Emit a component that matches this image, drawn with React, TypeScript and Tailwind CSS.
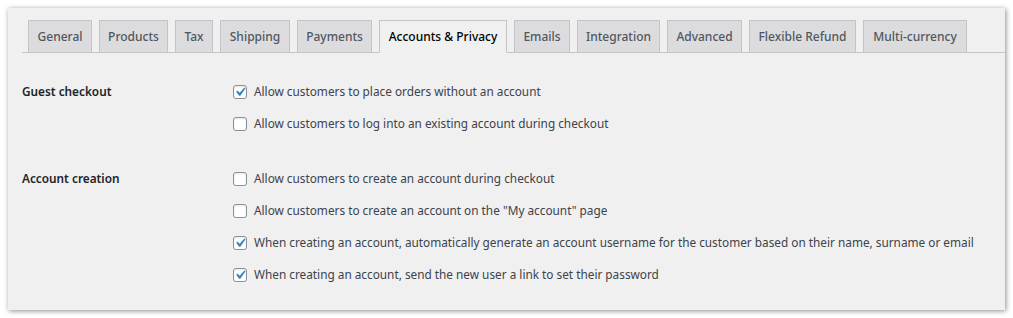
const TABS = [
  { name: "General", w: "w-[64px]" },
  { name: "Products", w: "w-[69px]" },
  { name: "Tax", w: "w-[38px]" },
  { name: "Shipping", w: "w-[70px]" },
  { name: "Payments", w: "w-[75px]" },
  { name: "Accounts & Privacy", w: "w-[128px]" },
  { name: "Emails", w: "w-[56px]" },
  { name: "Integration", w: "w-[83px]" },
  { name: "Advanced", w: "w-[75px]" },
  { name: "Flexible Refund", w: "w-[107px]" },
  { name: "Multi-currency", w: "w-[104px]" },
];

const ACTIVE = "Accounts & Privacy";

const GROUPS = [
  {
    label: "Guest checkout",
    options: [
      { text: "Allow customers to place orders without an account", checked: true },
      { text: "Allow customers to log into an existing account during checkout", checked: false },
    ],
  },
  {
    label: "Account creation",
    options: [
      { text: "Allow customers to create an account during checkout", checked: false },
      { text: 'Allow customers to create an account on the "My account" page', checked: false },
      {
        text: "When creating an account, automatically generate an account username for the customer based on their name, surname or email",
        checked: true,
      },
      { text: "When creating an account, send the new user a link to set their password", checked: true },
    ],
  },
];

const Checkbox = ({ checked }: { checked: boolean }) => (
  <span className="relative h-[14px] w-[14px] shrink-0 rounded-[3px] border border-[#8c8f94] bg-white shadow-[inset_0_1px_2px_rgba(0,0,0,0.1)]">
    {checked && (
      <svg viewBox="0 0 20 20" className="absolute left-[-3px] top-[-3px] h-[18px] w-[18px]">
        <path d="M14.83 4.89l1.34.94-5.81 8.38H9.02L5.78 9.67l1.34-1.25 2.57 2.4z" fill="#3582c4" />
      </svg>
    )}
  </span>
);

export default function App() {
  return (
    <div className="h-[318px] w-[1013px] bg-white p-[8px] font-['Noto_Sans',sans-serif]">
      <div className="h-[302px] w-[997px] bg-[#f0f0f1] pt-[12px] shadow-[1px_1px_5px_rgba(0,0,0,0.45)]">
        {/* tabs */}
        <div className="ml-[14px] flex gap-[7px] border-b border-[#c3c4c7] pl-[6px]">
          {TABS.map((tab) => {
            const active = tab.name === ACTIVE;
            return (
              <div
                key={tab.name}
                className={
                  active
                    ? `-mb-px flex h-[33px] items-center justify-center whitespace-nowrap border border-[#c3c4c7] border-b-[#f0f0f1] bg-[#f0f0f1] text-[12px] font-medium text-black ${tab.w}`
                    : `-mb-px flex h-[33px] items-center justify-center whitespace-nowrap border border-[#c3c4c7] bg-[#dcdcde] text-[12px] font-medium text-[#50575e] ${tab.w}`
                }
              >
                {tab.name}
              </div>
            );
          })}
        </div>

        {/* settings */}
        <div className="flex flex-col gap-[23px] pl-[14px] pt-[23px]">
          {GROUPS.map((group) => (
            <div key={group.label} className="flex">
              <div className="flex h-[32px] w-[211px] items-center text-[11.8px] font-semibold text-[#1d2327]">
                {group.label}
              </div>
              <div className="flex flex-col">
                {group.options.map((opt) => (
                  <label
                    key={opt.text}
                    className="flex h-[32px] items-center gap-[7px] whitespace-nowrap text-[11.8px] text-[#3c434a]"
                  >
                    <Checkbox checked={opt.checked} />
                    {opt.text}
                  </label>
                ))}
              </div>
            </div>
          ))}
        </div>
      </div>
    </div>
  );
}
